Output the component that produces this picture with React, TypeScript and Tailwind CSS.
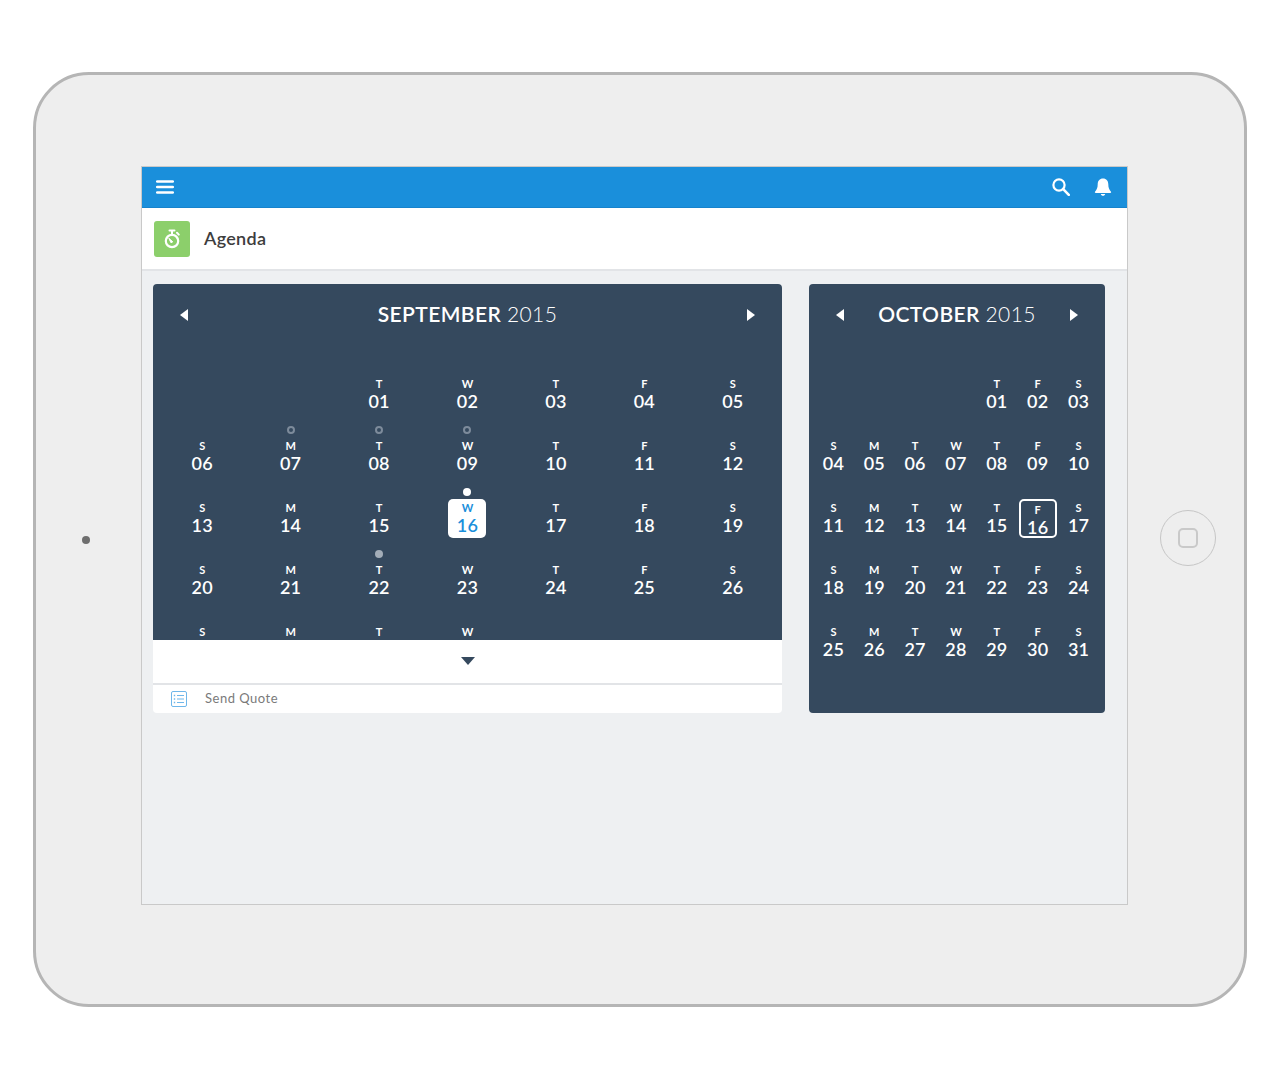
const LETTERS = ['S', 'M', 'T', 'W', 'T', 'F', 'S']

type DotKind = 'hollow' | 'solid' | 'grey'

interface CalendarDay {
  day: number
  letter: string
  dot?: DotKind
  selected?: 'today' | 'outline'
}

// firstWeekday: 0 = sunday
function buildDays(firstWeekday: number, length: number, dots: Record<number, DotKind>, selected: CalendarDay['selected']) {
  const cells: (CalendarDay | null)[] = []
  for (let i = 0; i < firstWeekday; i++) cells.push(null)
  for (let d = 1; d <= length; d++) {
    cells.push({
      day: d,
      letter: LETTERS[(firstWeekday + d - 1) % 7],
      dot: dots[d],
      selected: d === 16 ? selected : undefined,
    })
  }
  return cells
}

function Triangle({ dir }: { dir: 'left' | 'right' }) {
  return (
    <svg width="8" height="12" viewBox="0 0 8 12" className="mt-[6px] shrink-0">
      <path d={dir === 'left' ? 'M8 0v12L0 6z' : 'M0 0v12l8-6z'} fill="#fff" />
    </svg>
  )
}

function Dot({ kind }: { kind?: DotKind }) {
  if (kind === 'hollow') return <span className="h-[8px] w-[8px] rounded-full border-2 border-[#7d8b9b]" />
  if (kind === 'solid') return <span className="h-[8px] w-[8px] rounded-full bg-white" />
  if (kind === 'grey') return <span className="h-[8px] w-[8px] rounded-full bg-[#a3adb8]" />
  return null
}

function DayCell({ cell }: { cell: CalendarDay | null }) {
  if (!cell) return <div className="h-[62px]" />
  const today = cell.selected === 'today'
  const outline = cell.selected === 'outline'
  return (
    <div className="flex h-[62px] flex-col items-center">
      <div className="flex h-[15px] items-center justify-center">
        <Dot kind={cell.dot} />
      </div>
      <div
        className={`flex h-[39px] w-[38px] flex-col items-center rounded-[5px] pt-[2px] ${
          today ? 'bg-white text-[#1a8fdb]' : 'text-white'
        } ${outline ? 'border-2 border-white pt-0' : ''}`}
      >
        <span className="h-[14px] text-[11px] leading-[14px] font-bold">{cell.letter}</span>
        <span className="h-[20px] text-[18px] leading-[20px] font-semibold tracking-[0.2px]">
          {String(cell.day).padStart(2, '0')}
        </span>
      </div>
    </div>
  )
}

function MonthHeader({ month, pad }: { month: string; pad: string }) {
  return (
    <div className={`flex h-[76px] items-start justify-between pt-[19px] ${pad}`}>
      <Triangle dir="left" />
      <div className="text-[21px] leading-[22px] text-white tracking-[0.4px] whitespace-nowrap">
        <span className="font-semibold">{month}</span> <span className="font-light">2015</span>
      </div>
      <Triangle dir="right" />
    </div>
  )
}

function Screen() {
  const september = buildDays(2, 30, { 7: 'hollow', 8: 'hollow', 9: 'hollow', 16: 'solid', 22: 'grey' }, 'today')
  const october = buildDays(4, 31, {}, 'outline').slice(0)

  return (
    <div className="ml-[51px] h-[739px] w-[987px] shrink-0 self-start mt-[91px] border border-[#c9c9c9] bg-[#eef0f2]">
      <header className="flex h-[41px] items-center border-b border-[#1683cc] bg-[#1a8fdb] pl-[14px] pr-[15px]">
        <svg width="18" height="14" viewBox="0 0 18 14">
          <path d="M1.2 1.5h15.6M1.2 7h15.6M1.2 12.5h15.6" stroke="#fff" strokeWidth="2.6" strokeLinecap="round" />
        </svg>
        <svg width="18" height="18" viewBox="0 0 18 18" className="ml-auto">
          <circle cx="7" cy="7" r="5.6" fill="none" stroke="#fff" strokeWidth="2.2" />
          <path d="M11.2 11.2l5.6 5.6" stroke="#fff" strokeWidth="2.6" strokeLinecap="round" />
        </svg>
        <svg width="18" height="18" viewBox="0 0 18 18" className="ml-[24px]">
          <path
            d="M9 0.5c3.4 0 5.3 2.7 5.3 5.8 0 3.600 1 5.300 2.700 7.500 0.400 0.700 0 1.200-0.700 1.200H1.700c-0.700 0-1.100-0.500-0.700-1.200 1.700-2.200 2.700-3.900 2.700-7.500C3.700 3.200 5.600 0.500 9 0.500zM6.800 16h4.400c-0.200 1-1.100 1.800-2.200 1.800S7 17 6.800 16z"
            fill="#fff"
          />
        </svg>
      </header>

      <div className="flex h-[63px] items-center border-b-2 border-[#e2e4e7] bg-white pl-[12px]">
        <div className="flex h-[36px] w-[36px] items-center justify-center rounded-[3px] bg-[#8ccf6b]">
          <svg width="18" height="20" viewBox="0 0 18 20" fill="none" stroke="#fff">
            <circle cx="9" cy="12" r="6.200" strokeWidth="2.200" />
            <path d="M6.500 1.500h5M9 1.500v4M14 3.800l1.800 1.800" strokeWidth="2" strokeLinecap="round" />
            <path d="M5.800 9.200L9.800 12.800 8 13.800z" fill="#fff" strokeWidth="1" strokeLinejoin="round" />
          </svg>
        </div>
        <span className="ml-[14px] text-[18px] font-semibold text-[#3d3d3d] tracking-[0.3px]">Agenda</span>
      </div>

      <div className="flex gap-[27px] pl-[11px] pt-[13px]">
        <section className="w-[629px] overflow-hidden rounded-[4px] bg-white">
          <div className="h-[356px] overflow-hidden bg-[#35495e]">
            <MonthHeader month="SEPTEMBER" pad="pl-[27px] pr-[27px]" />
            <div className="grid grid-cols-7 px-[5px]">
              {september.map((cell, i) => (
                <DayCell key={i} cell={cell} />
              ))}
            </div>
          </div>
          <div className="flex h-[43px] items-start justify-center pt-[17px]">
            <svg width="14" height="8" viewBox="0 0 14 8">
              <path d="M0 0h14L7 8z" fill="#35495e" />
            </svg>
          </div>
          <div className="flex h-[30px] items-center border-t-2 border-[#e2e4e7] pl-[18px]">
            <svg width="16" height="16" viewBox="0 0 16 16" fill="none" stroke="#6fb7ea">
              <rect x="0.500" y="0.500" width="15" height="15" rx="1.500" />
              <path d="M6 4.500h7M6 8h7M6 11.500h7" />
              <path d="M2.800 4.500h1.400M2.800 8h1.400M2.800 11.500h1.400" strokeWidth="1.400" />
            </svg>
            <span className="ml-[18px] text-[13px] text-[#7a7a7a] tracking-[0.5px]">Send Quote</span>
          </div>
        </section>

        <section className="h-[429px] w-[296px] overflow-hidden rounded-[4px] bg-[#35495e]">
          <MonthHeader month="OCTOBER" pad="pl-[27px] pr-[27px]" />
          <div className="grid grid-cols-7 pl-[4px] pr-[6px]">
            {october.map((cell, i) => (
              <DayCell key={i} cell={cell} />
            ))}
          </div>
        </section>
      </div>
    </div>
  )
}

export default function App() {
  return (
    <div className="h-[1080px] w-[1280px] overflow-hidden bg-white pl-[33px] pt-[72px] font-['Lato',sans-serif]">
      <div className="flex h-[935px] w-[1214px] items-center rounded-[56px] border-[3px] border-[#b5b5b5] bg-[#eeeeee] pl-[46px]">
        <div className="h-[8px] w-[8px] shrink-0 rounded-full bg-[#6e6e6e]" />
        <Screen />
        <div className="mb-[3px] ml-[32px] flex h-[56px] w-[56px] shrink-0 items-center justify-center rounded-full border border-[#c6c6c6]">
          <div className="h-[20px] w-[20px] rounded-[5px] border-2 border-[#c9c9c9]" />
        </div>
      </div>
    </div>
  )
}
